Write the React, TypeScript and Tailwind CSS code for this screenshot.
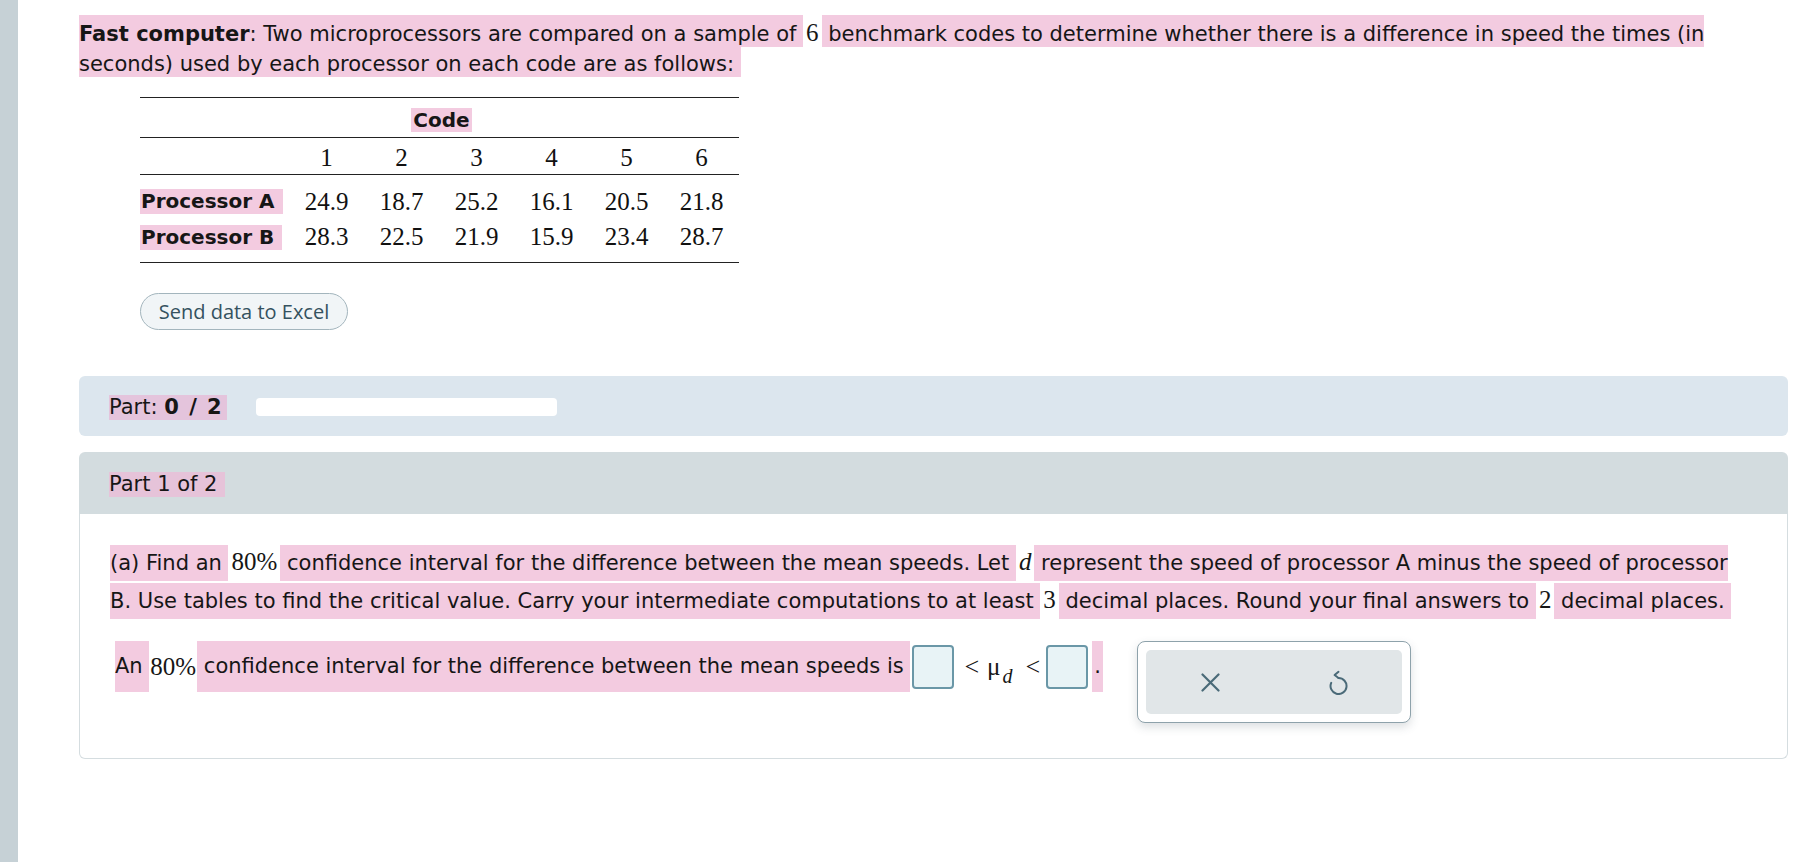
import React from "react";

const PINK = "bg-[#f3cbe0]";

function P({ children, className = "" }: { children: React.ReactNode; className?: string }) {
  return <span className={`${PINK} ${className}`}>{children}</span>;
}

function M({ children, italic = false }: { children: React.ReactNode; italic?: boolean }) {
  return (
    <span
      className={`font-['Liberation_Serif','Times_New_Roman',serif] text-[25px] px-[3px] ${italic ? "italic" : ""}`}
    >
      {children}
    </span>
  );
}

function XIcon() {
  return (
    <svg width="19" height="19" viewBox="0 0 19 19" fill="none">
      <path d="M1.5 1.5 L17.5 17.5 M17.5 1.5 L1.5 17.5" stroke="#4a6a78" strokeWidth="2.2" strokeLinecap="round" />
    </svg>
  );
}

function UndoIcon() {
  return (
    <svg width="20" height="25" viewBox="0 0 20 25" fill="none">
      <path
        d="M10.5 8 A8 8 0 1 1 3.2 12.8"
        stroke="#4a6a78"
        strokeWidth="2"
        strokeLinecap="round"
        fill="none"
      />
      <path d="M10.5 1.8 L6.6 5 L10.5 8" stroke="#4a6a78" strokeWidth="2" strokeLinecap="round" strokeLinejoin="round" />
    </svg>
  );
}

const cols = "grid grid-cols-[149px_repeat(6,75px)] items-center";
const num = "text-center font-['Liberation_Serif','Times_New_Roman',serif] text-[25px] leading-[28px] pt-[3px] text-[#111]";

export default function App() {
  const codes = ["1", "2", "3", "4", "5", "6"];
  const a = ["24.9", "18.7", "25.2", "16.1", "20.5", "21.8"];
  const b = ["28.3", "22.5", "21.9", "15.9", "23.4", "28.7"];
  return (
    <div className="flex min-h-[862px] bg-white text-[#161616] font-['DejaVu_Sans',Verdana,sans-serif] text-[21px]">
      <div className="w-[18px] shrink-0 bg-[#c6d1d6]" />
      <div className="flex-1 pl-[61px] pr-[12px] pt-[18px]">
        <p className="leading-[30px]">
          <P className="pt-[7px] pb-[1px]">
            <b>Fast computer</b>: Two microprocessors are compared on a sample of{" "}
          </P>
          <M>6</M>
          <P className="pt-[7px] pb-[1px]">
            {" "}benchmark codes to determine whether there is a difference in speed the times (in
          </P>
          <br />
          <P className="pt-[7px] pb-[1px]">seconds) used by each processor on each code are as follows:&nbsp;</P>
        </p>

        <div className="ml-[61px] mt-[18px] w-[599px]">
          <div className="border-t border-[#222] h-[40px] flex items-center justify-center pt-[4px]">
            <span className={`${PINK} font-bold text-[20px] h-[24px] leading-[24px] px-[2px] ml-[4px]`}>Code</span>
          </div>
          <div className={`border-t border-[#222] h-[37px] ${cols}`}>
            <div />
            {codes.map((c) => (
              <div key={c} className={num}>
                {c}
              </div>
            ))}
          </div>
          <div className="border-t border-b border-[#222] pt-[7px] pb-[9px]">
            <div className={`h-[36px] ${cols}`}>
              <div className="pt-[4px]">
                <span className={`${PINK} inline-block font-bold text-[20px] h-[25px] leading-[25px] pr-[8px] pl-[1px]`}>Processor A</span>
              </div>
              {a.map((v, i) => (
                <div key={i} className={num}>
                  {v}
                </div>
              ))}
            </div>
            <div className={`h-[35px] ${cols}`}>
              <div className="pt-[4px]">
                <span className={`${PINK} inline-block font-bold text-[20px] h-[25px] leading-[25px] pr-[8px] pl-[1px]`}>Processor B</span>
              </div>
              {b.map((v, i) => (
                <div key={i} className={num}>
                  {v}
                </div>
              ))}
            </div>
          </div>
          <button className="mt-[30px] h-[37px] w-[208px] rounded-full border border-[#a3b5bd] bg-[#f1f5f7] text-[#35525f] font-['Open_Sans',sans-serif] font-medium text-[20px] flex items-center justify-center">
            Send data to Excel
          </button>
        </div>

        <div className="mt-[46px] h-[60px] rounded-[6px] bg-[#dce6ee] flex items-center pl-[30px] pt-[2px]">
          <span className="bg-[#e4c4dc] h-[25px] leading-[25px] pr-[4px]">
            Part: <b className="tracking-[1.5px]">0 / 2</b>
          </span>
          <div className="ml-[29px] h-[18px] w-[301px] rounded-[4px] bg-white" />
        </div>

        <div className="mt-[16px]">
          <div className="h-[62px] rounded-t-[6px] bg-[#d3dcdf] flex items-center pl-[30px] pt-[2px]">
            <span className="bg-[#e6c3d9] h-[25px] leading-[25px] pr-[8px]">Part 1 of 2</span>
          </div>
          <div className="h-[245px] border border-t-0 border-[#d5dde0] rounded-b-[6px] bg-white pl-[30px] pt-[30px]">
            <p className="leading-[35.5px] h-[71px]">
              <P className="py-[6px]">(a) Find an </P>
              <M>80%</M>
              <P className="py-[6px]">
                {" "}confidence interval for the difference between the mean speeds. Let{" "}
              </P>
              <M italic>d</M>
              <P className="py-[6px]"> represent the speed of processor A minus the speed of processor</P>
              <br />
              <P className="py-[6px]">
                B. Use tables to find the critical value. Carry your intermediate computations to at least{" "}
              </P>
              <M>3</M>
              <P className="py-[6px]"> decimal places. Round your final answers to </P>
              <M>2</M>
              <P className="py-[6px]"> decimal places.&nbsp;</P>
            </p>

            <div className="mt-[26px] flex items-start">
              <div className="flex h-[51px] items-stretch pl-[5px] whitespace-pre">
                <span className={`${PINK} flex items-center`}>An </span>
                <span className="flex items-center font-['Liberation_Serif','Times_New_Roman',serif] text-[25px] px-[1px]">80%</span>
                <span className={`${PINK} flex items-center`}> confidence interval for the difference between the mean speeds is </span>
                <span className="flex items-center pl-[2px]">
                  <span className="h-[44px] w-[42px] rounded-[4px] border-2 border-[#6a97a7] bg-[#e8f3f6]" />
                  <span className="ml-[10px] font-['Liberation_Serif','Times_New_Roman',serif] text-[26px] leading-none">&lt;</span>
                  <span className="ml-[8px] font-['Liberation_Serif','Times_New_Roman',serif] text-[25px] leading-none">μ</span>
                  <span className="ml-[2px] mt-[18px] font-['Liberation_Serif','Times_New_Roman',serif] italic text-[20px] leading-none">d</span>
                  <span className="ml-[13px] font-['Liberation_Serif','Times_New_Roman',serif] text-[26px] leading-none">&lt;</span>
                  <span className="ml-[6px] h-[44px] w-[42px] rounded-[4px] border-2 border-[#6a97a7] bg-[#e8f3f6]" />
                </span>
                <span className={`${PINK} ml-[4px] w-[11px] flex items-center pl-[2px]`}>.</span>
              </div>

              <div className="ml-[34px] w-[274px] h-[82px] rounded-[8px] border border-[#8ea2ab] bg-white p-[8px] shadow-[0_4px_10px_rgba(60,80,90,0.18)]">
                <div className="h-full rounded-[5px] bg-[#e1e6e8] grid grid-cols-2 items-center justify-items-center">
                  <XIcon />
                  <UndoIcon />
                </div>
              </div>
            </div>
          </div>
        </div>
      </div>
    </div>
  );
}
